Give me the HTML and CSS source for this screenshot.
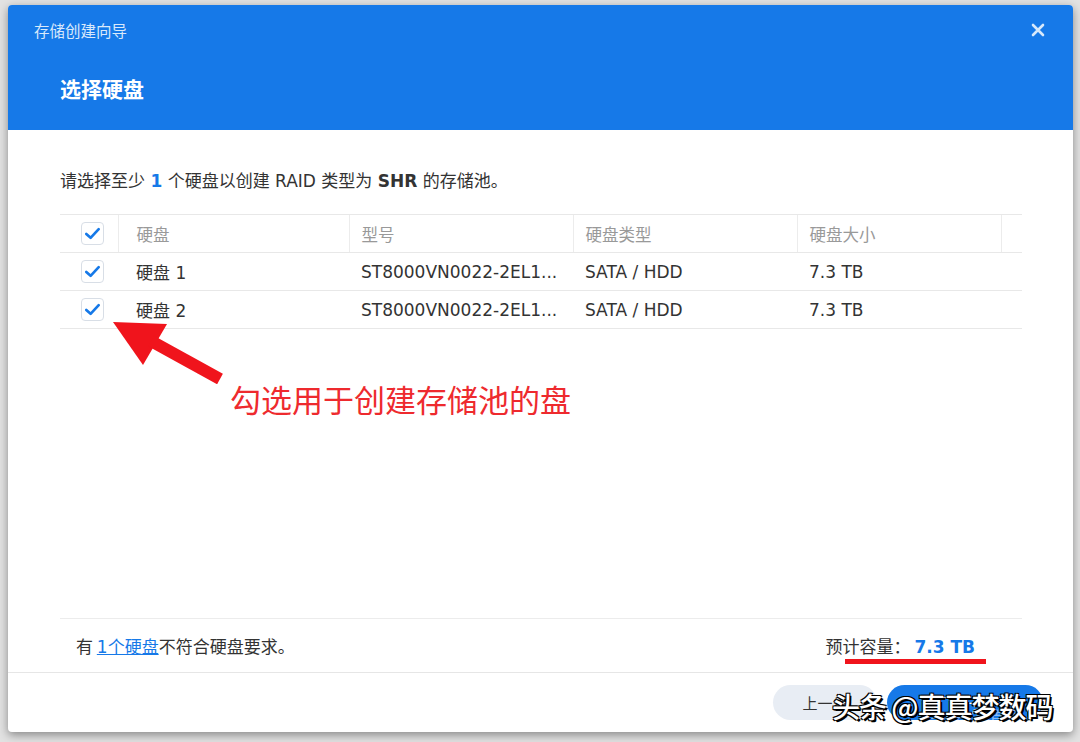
FILE: index.html
```html
<!DOCTYPE html>
<html lang="zh-CN">
<head>
    <meta charset="UTF-8">
    <title>存储创建向导</title>
    <link rel="stylesheet" href="styles.css">
</head>
<body>
    <div class="dialog">
        <!-- 顶部蓝色标题栏 -->
        <div class="dialog-header">
            <div class="header-top">
                <span class="wizard-title">存储创建向导</span>
                <svg class="close-icon" viewBox="0 0 14 14" width="14" height="14">
                    <path d="M2 2 L12 12 M12 2 L2 12" stroke="#d6e8fb" stroke-width="2.6" stroke-linecap="round"/>
                </svg>
            </div>
            <h2 class="step-title">选择硬盘</h2>
        </div>

        <div class="dialog-body">
            <p class="hint">请选择至少 <b class="blue">1</b> 个硬盘以创建 RAID 类型为 <b>SHR</b> 的存储池。</p>

            <table class="disk-table">
                <colgroup>
                    <col class="w-check">
                    <col class="w-name">
                    <col class="w-model">
                    <col class="w-type">
                    <col class="w-size">
                    <col class="w-rest">
                </colgroup>
                <thead>
                    <tr>
                        <th class="col-check"><span class="checkbox"></span></th>
                        <th class="col-name">硬盘</th>
                        <th>型号</th>
                        <th>硬盘类型</th>
                        <th>硬盘大小</th>
                        <th></th>
                    </tr>
                </thead>
                <tbody>
                    <tr>
                        <td class="col-check"><span class="checkbox"></span></td>
                        <td class="col-name">硬盘 1</td>
                        <td>ST8000VN0022-2EL1...</td>
                        <td>SATA / HDD</td>
                        <td>7.3 TB</td>
                        <td></td>
                    </tr>
                    <tr>
                        <td class="col-check"><span class="checkbox"></span></td>
                        <td class="col-name">硬盘 2</td>
                        <td>ST8000VN0022-2EL1...</td>
                        <td>SATA / HDD</td>
                        <td>7.3 TB</td>
                        <td></td>
                    </tr>
                </tbody>
            </table>

            <!-- 标注 -->
            <div class="note">
                <svg class="note-arrow" viewBox="0 0 112 62" width="112" height="62">
                    <polygon points="0,0 54,2 30,43" fill="#f0141c"/>
                    <line x1="38" y1="19" x2="107" y2="57" stroke="#f0141c" stroke-width="12"/>
                </svg>
                <span class="note-text">勾选用于创建存储池的盘</span>
            </div>
        </div>

        <div class="info-bar">
            <span class="info-left">有 <a href="#">1个硬盘</a>不符合硬盘要求。</span>
            <span class="capacity">预计容量： <b class="blue">7.3 TB</b></span>
        </div>

        <div class="button-bar">
            <button class="btn btn-back">上一步</button>
            <button class="btn btn-next">下一步</button>
            <div class="watermark">
                <span class="wm-main">头条 @真真梦数码</span>
                <span class="wm-sub">值 什么值得买</span>
            </div>
        </div>
    </div>
</body>
</html>
```

FILE: styles.css
```css
body {
    margin: 0;
    background-color: #e2e2e2;
    font-family: "DejaVu Sans", "Noto Sans CJK SC", sans-serif;
    color: #333;
    height: 742px;
    overflow: hidden;
}

.dialog {
    margin: 5px 0 0 8px;
    width: 1065px;
    height: 727px;
    background: white;
    border-radius: 4px;
    box-shadow: 0 3px 10px rgba(0,0,0,0.4);
    display: flex;
    flex-direction: column;
    overflow: hidden;
}

/* 标题栏 */
.dialog-header {
    height: 125px;
    box-sizing: border-box;
    background-color: #1679e8;
    padding: 13px 0 0 26px;
    color: white;
}

.header-top {
    display: flex;
    align-items: center;
    justify-content: space-between;
    padding-right: 28px;
    height: 24px;
}

.wizard-title {
    font-family: "Noto Sans CJK SC", sans-serif;
    font-size: 15.5px;
    color: #d9e9fb;
}

.step-title {
    margin: 31px 0 0 26px;
    font-family: "Noto Sans CJK SC", sans-serif;
    font-size: 21px;
    line-height: 30px;
    font-weight: 700;
}

/* 内容 */
.dialog-body {
    flex: 1;
    padding: 39px 51px 0 52px;
    position: relative;
}

.hint {
    margin: 0 0 21px;
    font-size: 17px;
    line-height: 24px;
}

.hint b {
    font-weight: 700;
}

.blue {
    color: #1679e8;
}

.disk-table {
    width: 962px;
    table-layout: fixed;
    border-collapse: collapse;
    font-size: 17px;
}

.w-check { width: 58px; }
.w-name { width: 231px; }
.w-model { width: 224px; }
.w-type { width: 224px; }
.w-size { width: 204px; }
.w-rest { width: 21px; }

.disk-table th,
.disk-table td {
    height: 37px;
    padding: 0 12px;
    text-align: left;
    border-top: 1px solid #e8e8e8;
    border-bottom: 1px solid #e8e8e8;
    white-space: nowrap;
    overflow: hidden;
}

.disk-table th {
    font-weight: normal;
    font-size: 16.5px;
    color: #999;
    font-family: "Noto Sans CJK SC", sans-serif;
    border-left: 1px solid #ececec;
}

.disk-table th.col-check {
    border-left: none;
}

.disk-table .col-check {
    padding: 0 0 0 21px;
}

.disk-table .col-name {
    padding-left: 18px;
}

.checkbox {
    display: block;
    width: 21px;
    height: 21px;
    border: 1px solid #d8dee6;
    border-radius: 4px;
    background: white url("data:image/svg+xml,%3Csvg xmlns='http://www.w3.org/2000/svg' viewBox='0 0 22 22'%3E%3Cpath d='M4.5 11.5 L9 15.5 L17.5 6.5' fill='none' stroke='%231679e8' stroke-width='2.8' stroke-linecap='round' stroke-linejoin='round'/%3E%3C/svg%3E") center / 21px 21px no-repeat;
}

/* 红色标注 */
.note {
    display: flex;
    padding: 50px 0 0 170px;
}

.note-arrow {
    position: absolute;
    left: 105px;
    top: 192px;
}

.note-text {
    font-family: "Noto Sans CJK SC", sans-serif;
    font-size: 31px;
    line-height: 40px;
    color: #ee2a2e;
}

/* 底部信息栏 */
.info-bar {
    margin: 0 51px 0 52px;
    height: 53px;
    border-top: 1px solid #ececec;
    display: flex;
    align-items: center;
    justify-content: space-between;
    padding: 0 47px 0 16px;
    font-family: "Noto Sans CJK SC", sans-serif;
    font-size: 17px;
}

.info-left a {
    color: #1679e8;
    font-family: "DejaVu Sans", "Noto Sans CJK SC", sans-serif;
}

.capacity {
    position: relative;
}

.capacity b {
    font-family: "DejaVu Sans", sans-serif;
}

.capacity::after {
    content: "";
    position: absolute;
    left: 19px;
    right: -11px;
    bottom: -6px;
    height: 5px;
    background: #f0141c;
}

/* 按钮 */
.button-bar {
    height: 60px;
    box-sizing: border-box;
    border-top: 1px solid #e6e6e6;
    display: flex;
    justify-content: flex-end;
    align-items: flex-start;
    gap: 10px;
    padding: 12px 30px 0 0;
    position: relative;
}

.btn {
    height: 35px;
    border: none;
    border-radius: 18px;
    font-family: "Noto Sans CJK SC", sans-serif;
    font-size: 15px;
}

.btn-back {
    width: 104px;
    background-color: #e8edf4;
    color: #333;
}

.btn-next {
    width: 156px;
    background-color: #1679e8;
    color: white;
}

.watermark {
    position: absolute;
    left: 824px;
    top: 13px;
    width: 236px;
}

.wm-main {
    position: relative;
    z-index: 2;
    font-family: "Noto Sans CJK SC", sans-serif;
    font-size: 28px;
    font-weight: 500;
    color: white;
    letter-spacing: -1px;
    text-shadow: 2px 2px 0 #000, -1px -1px 0 #000, 1px -1px 0 #000, -1px 1px 0 #000;
}

.wm-sub {
    position: absolute;
    left: 88px;
    top: 18px;
    font-family: "Noto Sans CJK SC", sans-serif;
    font-size: 20px;
    color: rgba(255,255,255,0.5);
    white-space: nowrap;
}
```
